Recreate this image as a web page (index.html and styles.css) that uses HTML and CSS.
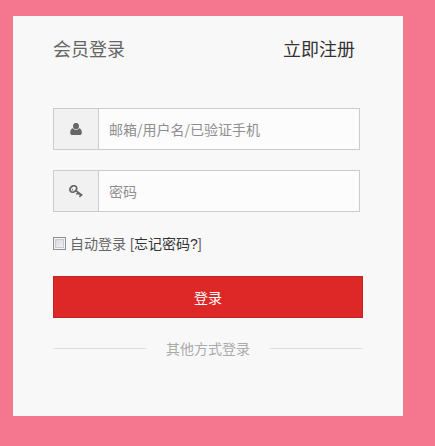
FILE: index.html
```html
<!DOCTYPE html>
<html lang="zh-CN">
<head>
<meta charset="utf-8">
<title>会员登录</title>
<link rel="stylesheet" href="styles.css">
</head>
<body>
<main class="panel">
  <header class="heading">
    <h1 class="title">会员登录</h1>
    <a class="register">立即注册</a>
  </header>
  <form class="form">
    <div class="field">
      <span class="addon">
        <svg class="icon" width="12" height="12" viewBox="0 0 12 12"><ellipse cx="6" cy="3.1" rx="3" ry="3.2"/><path d="M2.900 5.300C1 5.700.2 7.400.2 9.700c0 1.400.9 2.300 2.100 2.300h7.400c1.200 0 2.100-.9 2.100-2.300 0-2.300-.8-4-2.700-4.400C8.300 6.300 7.300 6.900 6 6.900s-2.300-.6-3.100-1.600z"/></svg>
      </span>
      <input class="input" type="text" placeholder="邮箱/用户名/已验证手机">
    </div>
    <div class="field">
      <span class="addon">
        <svg class="icon" width="14" height="13" viewBox="0 0 14 13"><ellipse class="ring" cx="4.300" cy="4" rx="3.600" ry="2.900" transform="rotate(-38 4.300 4)"/><path class="shaft" d="M6.300 5.100l7 5.400M9.300 7.300l-1.900 2.300M12.300 9.600l-1.800 2.300M10.700 8.500l-1 1.300"/><circle cx="3.400" cy="4.700" r=".7"/></svg>
      </span>
      <input class="input" type="password" placeholder="密码">
    </div>
    <div class="options">
      <input class="check" type="checkbox" id="auto">
      <label class="label" for="auto">自动登录</label>
      <span class="forgot">[<a>忘记密码?</a>]</span>
    </div>
    <button class="submit" type="button">登录</button>
  </form>
  <div class="divider">其他方式登录</div>
</main>
</body>
</html>
```
FILE: styles.css
```css
* { box-sizing: border-box; }

body {
  margin: 0;
  padding: 16px 32px 30px 13px;
  background: #f4778f;
  color: #666;
  font: 14px/20px "Liberation Sans", "Noto Sans CJK SC", sans-serif;
}

.panel {
  width: 390px;
  height: 400px;
  padding: 21px 40px 0;
  background: #f8f8f8;
}

.heading {
  display: flex;
  justify-content: space-between;
  width: 302px;
  height: 71px;
  font-size: 18px;
  line-height: 26px;
}

.title { margin: 0; font-size: 18px; font-weight: 400; }
.register { color: #333; }

.field {
  display: flex;
  width: 307px;
  height: 42px;
  margin-bottom: 20px;
  border: 1px solid #ccc;
  background: #fcfcfc;
}

.addon {
  display: flex;
  align-items: center;
  justify-content: center;
  width: 45px;
  border-right: 1px solid #ccc;
  background: #f1f1f1;
}

.icon { fill: #666; }
.ring { fill: none; stroke: #666; stroke-width: 1.8; }
.shaft { fill: none; stroke: #666; stroke-width: 1.6; }

.input {
  flex: 1;
  min-width: 0;
  padding: 0 10px 1px;
  border: 0;
  outline: 0;
  background: transparent;
  font: 14px "Noto Sans CJK SC", sans-serif;
}

.input::placeholder { color: #8f8f8f; opacity: 1; }

.options {
  display: flex;
  align-items: center;
  height: 22px;
  margin-bottom: 22px;
}

.check {
  appearance: none;
  width: 13px;
  height: 13px;
  margin: 0 4px 0 0;
  border: 1px solid #8e8f8f;
  background: linear-gradient(135deg, #d0d3d7, #f8f8f8);
  box-shadow: inset 0 0 0 1px #f4f4f4, inset 0 0 0 2px #c8cbcf;
}

.label, .forgot { padding-top: 1px; }
.forgot { margin-left: 4px; }
.forgot a { color: #333; }

.submit {
  display: block;
  width: 310px;
  height: 42px;
  padding: 1px 0 0;
  border: 1px solid #c42323;
  background: #de2727;
  color: #fff;
  font: inherit;
}

.divider {
  display: flex;
  align-items: center;
  justify-content: space-between;
  height: 20px;
  margin-top: 21px;
  color: #aaa;
}

.divider::before,
.divider::after {
  content: "";
  width: 93px;
  height: 1px;
  margin-bottom: 2px;
  background: #ddd;
}
```
